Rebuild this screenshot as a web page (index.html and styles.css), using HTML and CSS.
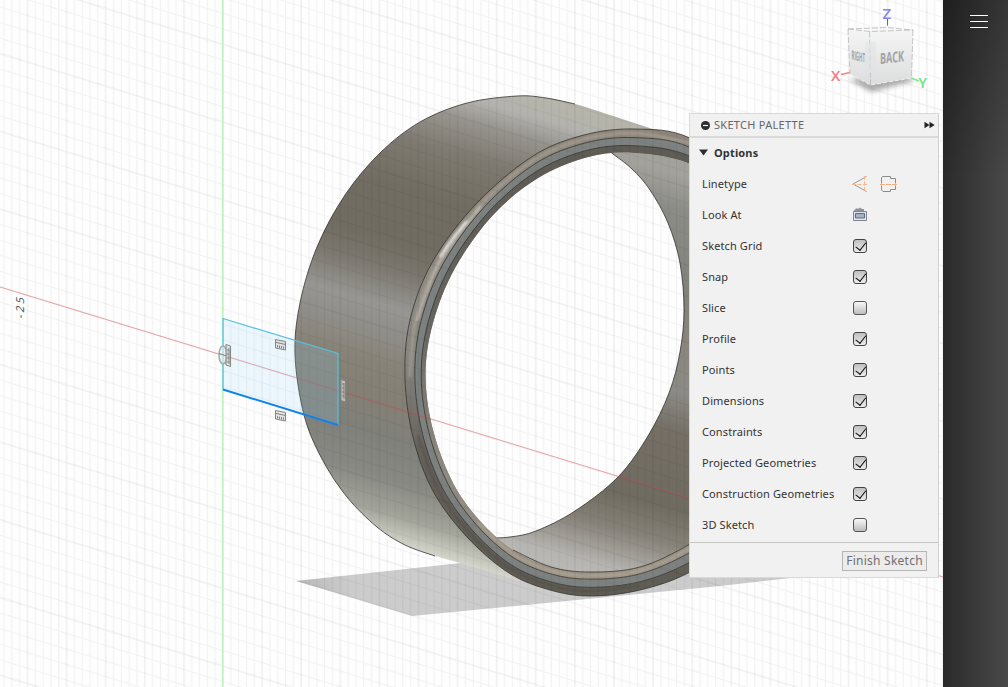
FILE: index.html
```html
<!DOCTYPE html>
<html lang="en">
<head>
<meta charset="utf-8">
<title>Sketch Palette</title>
<link rel="stylesheet" href="styles.css">
</head>
<body>
<div class="app">
  <main class="viewport">
    <svg class="scene" width="943" height="687" viewBox="0 0 943 687">
      <defs>
        <pattern id="grid" width="39.1" height="77.7" patternUnits="userSpaceOnUse" patternTransform="translate(223 355.3) skewY(17.1)">
          <path class="grid-minor" d="M7.82 0V77.7M15.64 0V77.7M23.46 0V77.7M31.28 0V77.7M0 15.54H39.1M0 31.08H39.1M0 46.62H39.1M0 62.16H39.1"/>
          <path class="grid-major" d="M0 0V77.7M39.1 0V77.7M0 0H39.1M0 77.7H39.1"/>
        </pattern>
        <linearGradient id="outside" gradientUnits="userSpaceOnUse" x1="567" y1="102" x2="435" y2="556">
          <stop offset="0" stop-color="#b7b6aa"/><stop offset=".05" stop-color="#b3b2ae"/><stop offset=".1" stop-color="#96938d"/>
          <stop offset=".17" stop-color="#7e7a71"/><stop offset=".27" stop-color="#726d62"/><stop offset=".38" stop-color="#716c61"/>
          <stop offset=".44" stop-color="#7b766e"/><stop offset=".52" stop-color="#979692"/><stop offset=".57" stop-color="#918f8b"/>
          <stop offset=".64" stop-color="#888378"/><stop offset=".71" stop-color="#858076"/><stop offset=".78" stop-color="#80807a"/>
          <stop offset=".87" stop-color="#888983"/><stop offset=".94" stop-color="#a2a399"/><stop offset="1" stop-color="#d6d7cc"/>
        </linearGradient>
        <linearGradient id="inside" gradientUnits="userSpaceOnUse" x1="690" y1="150" x2="575" y2="572">
          <stop offset="0" stop-color="#a0a09b"/><stop offset=".06" stop-color="#a3a29d"/><stop offset=".14" stop-color="#8c8c87"/>
          <stop offset=".32" stop-color="#82827c"/><stop offset=".43" stop-color="#8a867c"/><stop offset=".54" stop-color="#8d8b87"/>
          <stop offset=".63" stop-color="#756f65"/><stop offset=".8" stop-color="#706b60"/><stop offset=".88" stop-color="#878279"/>
          <stop offset=".97" stop-color="#b7b5b2"/><stop offset="1" stop-color="#bbb9b6"/>
        </linearGradient>
        <linearGradient id="bevelOuter" x1="0" y1="129" x2="0" y2="596" gradientUnits="userSpaceOnUse">
          <stop offset="0" stop-color="#8d857a"/><stop offset=".3" stop-color="#908c83"/><stop offset=".5" stop-color="#85847f"/>
          <stop offset=".7" stop-color="#66615b"/><stop offset="1" stop-color="#605d56"/>
        </linearGradient>
        <linearGradient id="bevelInner" x1="0" y1="150" x2="0" y2="572" gradientUnits="userSpaceOnUse">
          <stop offset="0" stop-color="#5f5b55"/><stop offset=".4" stop-color="#666561"/><stop offset=".7" stop-color="#8a877e"/>
          <stop offset="1" stop-color="#9b9385"/>
        </linearGradient>
        <linearGradient id="shadow" x1="296" y1="0" x2="350" y2="0" gradientUnits="userSpaceOnUse">
          <stop offset="0" stop-color="#b8b8b8"/><stop offset="1" stop-color="#cccccc"/>
        </linearGradient>
        <linearGradient id="cubeSide" x1="0" y1="0" x2="0" y2="1">
          <stop offset="0" stop-color="#f5f5f5"/><stop offset="1" stop-color="#dcdddd"/>
        </linearGradient>
        <filter id="soft" x="-20%" y="-50%" width="140%" height="200%"><feGaussianBlur stdDeviation="2.8"/></filter>
        <filter id="glint" x="-20%" y="-20%" width="140%" height="140%"><feGaussianBlur stdDeviation=".8"/></filter>
        <g id="parallel">
          <path class="glyph-box" d="M.5.5L10.5 2.5V11L.5 9Z"/>
          <path class="glyph-line" d="M1 3.4L10 5.4M2.5 6.2V8.4M4.5 6.6V9M6.5 7V9.4M8.5 7.4V9.8"/>
        </g>
      </defs>

      <rect class="paper" width="943" height="687"/>
      <path fill="url(#shadow)" d="M296 581L470 562L800 540L870 569L720 586L412 616Z"/>
      <path fill="url(#outside)" id="tube"/>
      <g id="rim"></g>
      <rect width="943" height="687" fill="url(#grid)"/>

      <path class="axis-y" d="M222.7 0V687"/>
      <path class="axis-x" d="M0 287L223 355.3L689 498L943 577"/>

      <path class="profile" d="M223 318.5L338 353.5V425L223 389.5Z"/>
      <path class="profile-edge" d="M223 389.5V318.5L338 353.5V425"/>
      <path class="profile-selected" d="M223 389.5L338 425"/>
      <use href="#parallel" x="275" y="339"/>
      <use href="#parallel" x="275" y="410"/>
      <ellipse class="origin" cx="223" cy="355" rx="4" ry="9"/>
      <path class="origin-cross" d="M219 353.5L227 356"/>
      <path class="glyph-box" d="M226 344.5L230.5 346V366.5L226 365Z"/>
      <path class="glyph-line" d="M229 348V364M227 350H229M227 354H229M227 358H229M227 362H229"/>
      <path class="glyph-box" d="M341 379.5L345.5 381V402L341 400.5Z"/>
      <path class="glyph-line" d="M344 383V399M342 384H344M342 388H344M342 392H344M342 396H344"/>
      <text class="tick-label" transform="translate(24 319) rotate(-90) skewX(-15)" textLength="21">-25</text>

      <path d="M849 79L871 92L914 81L905 74Z" fill="#777" opacity=".6" filter="url(#soft)"/>
      <path d="M887.5 19V29" stroke="#5c5ce0"/>
      <path d="M841 74.5L850 72.5" stroke="#ff7d80" stroke-width="1.4"/>
      <path d="M911 78L919 81" stroke="#7bea91" stroke-width="1.4"/>
      <path d="M848 29L887 25.5L913 30L870 32Z" fill="#f7f7f7"/>
      <path d="M848 29L869.5 31.5L870.5 85L850 74Z" fill="url(#cubeSide)"/>
      <path d="M869.5 31.5L913 30L911.5 78L870.5 85Z" fill="url(#cubeSide)"/>
      <path class="cube-edge" d="M848 29L869.5 31.5L913 30M848 29L887 27.5L913 30M848 29L850 74M913 30L911.5 78M869.5 31.5L870.5 85"/>
      <path class="cube-base" d="M850 74L870.5 85L911.5 78"/>
      <rect x="865" y="42" width="11" height="31" fill="#dfe3e6" opacity=".6"/>
      <text class="cube-label" transform="translate(851.5 59.5) skewY(13)" textLength="13.5" lengthAdjust="spacingAndGlyphs">RIGHT</text>
      <text class="cube-label back" transform="translate(880 64) skewY(-6)" textLength="24" lengthAdjust="spacingAndGlyphs">BACK</text>
      <text class="axis-label z" x="882.5" y="19">Z</text>
      <text class="axis-label x" x="831" y="81">X</text>
      <text class="axis-label y" x="918.5" y="88">Y</text>
    </svg>

    <section class="palette">
      <header class="palette-head">
        <svg width="9" height="9" viewBox="0 0 9 9"><circle cx="4.5" cy="4.5" r="4.5" fill="#2d2d2d"/><path d="M2 4.5H7" stroke="#f0f0f0" stroke-width="1.2"/></svg>
        <h1>SKETCH PALETTE</h1>
        <svg width="11" height="8" viewBox="0 0 11 8"><path d="M.5.8L5.5 4L.5 7.2ZM5.5.8L10.7 4L5.5 7.2Z" fill="#222"/></svg>
      </header>
      <div class="palette-body">
        <h2><svg width="9" height="7" viewBox="0 0 9 7"><path d="M0 .5H9L4.5 6.5Z" fill="#2d2d2d"/></svg>Options</h2>
        <div class="row"><span>Linetype</span><div class="icons">
          <svg width="16" height="18" viewBox="0 0 16 18"><path d="M14.5 1.5L1 9L14.5 16.5" fill="none" stroke="#9a9a9a"/><path d="M0 9.5H16M12.5 1V17" fill="none" stroke="#f7b68b" stroke-dasharray="4 1.5"/></svg>
          <svg width="17" height="18" viewBox="0 0 17 18"><path d="M10.5 1.5H2.5L1.5 3V15L3 16.5H10.5V14.5H15.5V3.5H10.5Z" fill="none" stroke="#8d8d8d"/><path d="M0 9.5H17" stroke="#f1f1f1" stroke-width="2"/><path d="M0 9.5H17" stroke="#f5ac7b" stroke-dasharray="5 1"/></svg>
        </div></div>
        <div class="row"><span>Look At</span><div class="icons">
          <svg width="16" height="15" viewBox="0 0 16 15"><path d="M1.5 4L4 1.5H7L8 .5L10 2H12V4" fill="#8e939c"/><path d="M1.5 4.5H14.5V13.5H1.5Z" fill="#e4e7ed" stroke="#7e8592"/><path d="M3.5 6.5H12.5V11H3.5Z" fill="#a9b0c4" stroke="#626a7a"/></svg>
        </div></div>
        <label class="row"><span>Sketch Grid</span><input type="checkbox" checked></label>
        <label class="row"><span>Snap</span><input type="checkbox" checked></label>
        <label class="row"><span>Slice</span><input type="checkbox"></label>
        <label class="row"><span>Profile</span><input type="checkbox" checked></label>
        <label class="row"><span>Points</span><input type="checkbox" checked></label>
        <label class="row"><span>Dimensions</span><input type="checkbox" checked></label>
        <label class="row"><span>Constraints</span><input type="checkbox" checked></label>
        <label class="row"><span>Projected Geometries</span><input type="checkbox" checked></label>
        <label class="row"><span>Construction Geometries</span><input type="checkbox" checked></label>
        <label class="row"><span>3D Sketch</span><input type="checkbox"></label>
      </div>
      <footer class="palette-foot"><button type="button">Finish Sketch</button></footer>
    </section>
  </main>
  <nav class="side"><button class="menu" type="button" aria-label="Menu"><i></i><i></i><i></i></button></nav>
</div>
<script src="ring.js"></script>
</body>
</html>
```
FILE: styles.css
```css
* { box-sizing: border-box; }
body { margin: 0; font-family: "Noto Sans", "Open Sans", sans-serif; overflow: hidden; }
.app { display: flex; width: 1008px; height: 687px; }
.viewport { position: relative; width: 943px; height: 687px; }
.scene { display: block; }
.paper { fill: #fefefe; }
.grid-minor { stroke: #000; stroke-opacity: .05; fill: none; }
.grid-major { stroke: #000; stroke-opacity: .085; fill: none; }
.axis-y { stroke: #b9f5bd; stroke-width: 1.6; }
.axis-x { stroke: #e2474c; stroke-opacity: .52; fill: none; stroke-width: .9; }
.edge { fill: none; stroke: #33332f; stroke-width: .8; }
.profile { fill: #8fd6f7; fill-opacity: .17; }
.profile-edge { fill: none; stroke: #55bfe0; stroke-width: 1.2; }
.profile-selected { stroke: #0f83ea; stroke-width: 2; }
.glyph-box { fill: #d9d9d9; fill-opacity: .7; stroke: #858585; stroke-width: 1; }
.glyph-line { fill: none; stroke: #777; stroke-width: .9; }
.origin { fill: #e8eeee; fill-opacity: .6; stroke: #a3abab; stroke-width: 1.6; }
.origin-cross { stroke: #7d8484; }
.tick-label { font-size: 11px; fill: #555; }
.cube-edge { fill: none; stroke: #b9b9b9; stroke-width: .8; stroke-dasharray: 6 2; }
.cube-base { fill: none; stroke: #eee; stroke-dasharray: 4 2; }
.cube-label { font: bold 13px "Open Sans", sans-serif; fill: #a0a3a6; }
.cube-label.back { font-size: 15px; }
.axis-label { font: 600 15px "Open Sans", sans-serif; }
.axis-label.x { fill: #f27c80; }
.axis-label.y { fill: #6be283; font-size: 14px; }
.axis-label.z { fill: #8583ec; }

.palette { position: absolute; left: 689px; top: 113px; width: 250px; height: 465px; display: flex; flex-direction: column; background: #f1f1f1; border: 1px solid #d9d9d9; border-right-color: #cfcfcf; color: #333; }
.palette-head { display: flex; align-items: center; height: 24px; padding: 0 3px 0 11px; border-bottom: 2px solid #d9d9d9; gap: 4px; }
.palette-head h1 { flex: 1; margin: 0; font-size: 11px; font-weight: 400; color: #666; line-height: 20px; letter-spacing: .28px; }
.palette-body { flex: 1; margin-top: -1px; }
.palette-body h2 { display: flex; align-items: center; gap: 6px; height: 31px; margin: 0; padding-left: 9px; font-size: 11px; font-weight: 700; letter-spacing: .15px; }
.row { display: flex; align-items: center; height: 31px; padding-left: 12px; font-size: 11px; letter-spacing: .12px; }
.row span { width: 151px; white-space: nowrap; }
.icons { display: flex; align-items: center; gap: 12px; margin-left: -1px; }
.row input { appearance: none; position: relative; width: 14px; height: 14px; margin: 0; border: 1px solid #555; border-radius: 3px; background: linear-gradient(#f8f8f8, #bdbdbd); }
.row input:checked { background: linear-gradient(#bfbfbf, #ececec); border-color: #444; }
.row input:checked::after { content: ""; position: absolute; left: 4px; top: .5px; width: 4.5px; height: 8.5px; border: solid #111; border-width: 0 1.6px 1.6px 0; transform: rotate(38deg); }
.palette-foot { display: flex; justify-content: flex-end; align-items: center; height: 35px; padding-right: 11px; border-top: 1px solid #c6c6c6; }
.palette-foot button { width: 85px; height: 20px; margin-top: 1px; padding: 0; border: 1px solid #b5b5b5; background: #ececec; color: #707070; font: 12px "Noto Sans", sans-serif; line-height: 17px; letter-spacing: .25px; white-space: nowrap; }

.side { width: 65px; display: flex; justify-content: center; align-items: flex-start; padding: 15px 0 0 7px; background: linear-gradient(#0004, #0000 180px), linear-gradient(90deg, #2a2a2a, #494949); }
.menu { display: flex; flex-direction: column; gap: 5px; width: 18px; padding: 0; border: 0; background: none; }
.menu i { width: 18px; height: 1px; background: #fff; }
```
FILE: ring.js
```js
// Smooth path through a list of points (Catmull-Rom to cubic Bezier).
function spline(p, closed) {
  const n = p.length;
  const at = i => closed ? p[(i + n) % n] : p[Math.max(0, Math.min(n - 1, i))];
  let d = 'M' + p[0];
  for (let i = 0; i < (closed ? n : n - 1); i++) {
    const [a, b, c, e] = [at(i - 1), at(i), at(i + 1), at(i + 2)];
    d += `C${b[0] + (c[0] - a[0]) / 6},${b[1] + (c[1] - a[1]) / 6} ${c[0] - (e[0] - b[0]) / 6},${c[1] - (e[1] - b[1]) / 6} ${c[0]},${c[1]}`;
  }
  return d + (closed ? 'Z' : '');
}

const outer = [[405,378],[410,320],[433,261],[477,203],[533,156],[584,135],[635,129],[690,138],[760,185],[806,270],[815,370],[795,460],[745,534],[690,572],[640,590],[590,596],[550,590],[509,573],[467,537],[433,491],[413,437]];
const inner = [[425.5,375],[433,323],[455,268],[493,215],[538,178],[588,157],[635,153],[690,164],[745,200],[785,275],[795,370],[775,450],[735,512],[690,544],[640,567],[590,572],[551,567],[513,550],[480,521],[453,483],[433,430]];
const back = [[657,130.5],[610,115],[575,104],[546,98],[517,96],[467,103],[420,122],[380,153],[345,195],[317,247],[300,303],[295,355],[304,415],[322,459],[347,497],[377,527],[405,545],[435,556]];
const far = [[605,148],[613,154],[632,169],[650,190],[668,223],[680,263],[684,310],[680,352],[669,393],[648,436],[618,477],[575,511],[536,531],[510,537],[488,538]];

// Ring edge lying between the outer and inner boundary; the left side is seen at a different angle.
const between = (f, g) => outer.map(([x, y], i) => {
  const side = Math.max(0, 1 - Math.abs(x - 405) / 120);
  const k = f + (g - f) * side;
  return [x + (inner[i][0] - x) * k, y + (inner[i][1] - y) * k];
});

const rim = document.getElementById('rim');
const add = (attrs, parent = rim) => {
  const el = document.createElementNS('http://www.w3.org/2000/svg', 'path');
  for (const k in attrs) el.setAttribute(k, attrs[k]);
  parent.appendChild(el);
};
const O = spline(outer, true), I = spline(inner, true);
const M = spline(between(.36, .48), true), N = spline(between(.7, .79), true);

document.getElementById('tube').setAttribute('d', spline(back) + 'L460,563L520,581L640,500L700,200Z');

const ns = 'http://www.w3.org/2000/svg';
const clip = document.createElementNS(ns, 'clipPath');
clip.id = 'hole';
add({ d: I }, clip);
rim.appendChild(clip);

add({ d: I, fill: '#fefefe' });
add({ d: spline(far) + 'L590,600L840,600L840,130Z', fill: 'url(#inside)', 'clip-path': 'url(#hole)' });
add({ d: spline(far), class: 'edge', 'clip-path': 'url(#hole)' });
add({ d: O + M, fill: 'url(#bevelOuter)', 'fill-rule': 'evenodd' });
add({ d: M + N, fill: '#7d8280', 'fill-rule': 'evenodd' });
add({ d: N + I, fill: 'url(#bevelInner)', 'fill-rule': 'evenodd' });
add({ d: spline(between(.18, .24).slice(0, 8)), fill: 'none', stroke: '#aca397', 'stroke-width': 3, filter: 'url(#glint)', opacity: .7 });
add({ d: spline(between(.22, .3).slice(1, 4)), fill: 'none', stroke: '#e8e6e0', 'stroke-width': 1.4, filter: 'url(#glint)', opacity: .7 });
add({ d: spline([[440, 257], [448, 245], [457, 233], [467, 221]]), fill: 'none', stroke: '#fff', 'stroke-width': 1.8, filter: 'url(#glint)' });
add({ d: spline(between(.2, .25).slice(14)), fill: 'none', stroke: '#4d4943', 'stroke-width': 2.5, filter: 'url(#glint)', opacity: .5 });
add({ d: spline(between(.84, .88).slice(12, 19)), fill: 'none', stroke: '#b9ae9f', 'stroke-width': 2, filter: 'url(#glint)', opacity: .7 });
add({ d: O, class: 'edge' });
add({ d: M, class: 'edge' });
add({ d: N, class: 'edge' });
add({ d: spline(inner.slice(12, 18)), class: 'edge' });
add({ d: spline(back.slice(2)), class: 'edge' });
```
